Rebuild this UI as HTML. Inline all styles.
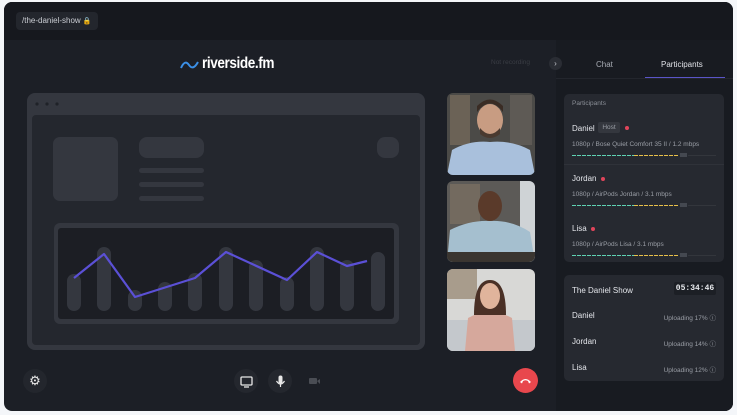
<!DOCTYPE html>
<html><head><meta charset="utf-8"><style>
*{margin:0;padding:0;box-sizing:border-box}
body{width:737px;height:415px;background:#f4f6f9;position:relative;overflow:hidden;font-family:"Liberation Sans",sans-serif}
.frame{position:absolute;left:4px;top:2px;width:729px;height:409px;background:#1c1f26;border-radius:8px;overflow:hidden}
.top{position:absolute;left:0;top:0;width:729px;height:38px;background:#16181e}
.pill{position:absolute;left:12px;top:10px;width:82px;height:18px;background:#23262d;border-radius:4px;color:#c9ccd2;font-size:8px;line-height:18px;padding-left:6px}
.side{position:absolute;left:552px;top:38px;width:177px;height:371px;background:#181b21}
.a{position:absolute}
.card{position:absolute;background:#262930;border-radius:5px}
.t{position:absolute;font-size:8px;color:#e3e5ea}
.s{position:absolute;font-size:6.5px;color:#9a9ea6}
.r{position:absolute;right:8px;font-size:6.5px;color:#9a9ea6}
.g{position:absolute;height:1px;background:repeating-linear-gradient(90deg,#5fd3b4 0 4px,transparent 4px 5px)}
.y{position:absolute;height:1px;background:repeating-linear-gradient(90deg,#e8c04a 0 4px,transparent 4px 5px)}
.ib{position:absolute;width:24px;height:24px;border-radius:12px;background:#24272e}
</style></head><body>
<div class="frame">
<div class="top"><div class="pill">/the-daniel-show <span style="font-size:7px">🔒</span></div></div>
<div class="side">
 <div class="a" style="left:40px;top:20px;font-size:8px;color:#a8acb4">Chat</div>
 <div class="a" style="left:105px;top:20px;font-size:8px;color:#e0e2e7">Participants</div>
 <div class="a" style="left:0;top:38px;width:177px;height:1px;background:#23262d"></div>
 <div class="a" style="left:89px;top:37px;width:80px;height:1px;background:#5a55c8"></div>
 <div class="card" style="left:8px;top:54px;width:160px;height:168px">
  <div class="s" style="left:8px;top:6px;color:#8a8e96">Participants</div>
  <div class="t" style="left:8px;top:30px">Daniel</div>
  <div class="a" style="left:34px;top:28px;width:22px;height:11px;background:#34373e;border-radius:2px;font-size:6.5px;color:#9a9ea6;line-height:11px;text-align:center">Host</div>
  <div class="a" style="left:61px;top:32px;width:4px;height:4px;border-radius:2px;background:#e0455a"></div>
  <div class="s" style="left:8px;top:47px">1080p / Bose Quiet Comfort 35 II / 1.2 mbps</div>
  <div class="g" style="left:8px;top:61px;width:62px"></div><div class="y" style="left:70px;top:61px;width:44px"></div>
  <div class="a" style="left:116px;top:59px;width:7px;height:4px;background:#444850"></div>
  <div class="a" style="left:124px;top:61px;width:28px;height:1px;background:#33363c"></div>
  <div class="a" style="left:0;top:70px;width:160px;height:1px;background:#2f3239"></div>
  <div class="t" style="left:8px;top:80px">Jordan</div>
  <div class="a" style="left:37px;top:83px;width:4px;height:4px;border-radius:2px;background:#e0455a"></div>
  <div class="s" style="left:8px;top:97px">1080p / AirPods Jordan / 3.1 mbps</div>
  <div class="g" style="left:8px;top:111px;width:62px"></div><div class="y" style="left:70px;top:111px;width:44px"></div>
  <div class="a" style="left:116px;top:109px;width:7px;height:4px;background:#444850"></div>
  <div class="a" style="left:124px;top:111px;width:28px;height:1px;background:#33363c"></div>
  <div class="t" style="left:8px;top:130px">Lisa</div>
  <div class="a" style="left:27px;top:133px;width:4px;height:4px;border-radius:2px;background:#e0455a"></div>
  <div class="s" style="left:8px;top:147px">1080p / AirPods Lisa / 3.1 mbps</div>
  <div class="g" style="left:8px;top:161px;width:62px"></div><div class="y" style="left:70px;top:161px;width:44px"></div>
  <div class="a" style="left:116px;top:159px;width:7px;height:4px;background:#444850"></div>
  <div class="a" style="left:124px;top:161px;width:28px;height:1px;background:#33363c"></div>
 </div>
 <div class="card" style="left:8px;top:235px;width:160px;height:106px">
  <div class="t" style="left:8px;top:11px">The Daniel Show</div>
  <div class="a" style="left:110px;top:7px;width:42px;height:13px;background:#1c1f25;border-radius:2px;font-family:'Liberation Mono',monospace;font-size:8px;font-weight:bold;color:#e8eaee;line-height:13px;text-align:center">05:34:46</div>
  <div class="t" style="left:8px;top:36px">Daniel</div><div class="r" style="top:37px">Uploading 17% ⓘ</div>
  <div class="t" style="left:8px;top:62px">Jordan</div><div class="r" style="top:63px">Uploading 14% ⓘ</div>
  <div class="t" style="left:8px;top:88px">Lisa</div><div class="r" style="top:89px">Uploading 12% ⓘ</div>
 </div>
</div>
<div class="a" style="left:545px;top:55px;width:13px;height:13px;border-radius:7px;background:#2a2d34;color:#c0c3c9;font-size:8px;text-align:center;line-height:13px">›</div>
<div class="a" style="left:487px;top:57px;font-size:6.5px;color:#3a3d44">Not recording</div>
<svg class="a" style="left:176px;top:56px" width="20" height="14"><path d="M1 10 Q5 1 9 7 Q13 13 18 4" stroke="#3b8fe6" stroke-width="2" fill="none"/></svg>
<div class="a" style="left:198px;top:53px;font-size:16px;font-weight:bold;color:#fff;letter-spacing:-0.5px;transform:scaleX(0.85);transform-origin:left">riverside.fm</div>
<svg class="a" style="left:0;top:0" width="552" height="409" viewBox="4 2 552 409">
 <rect x="27" y="93" width="398" height="257" rx="8" fill="#34373f"/>
 <circle cx="37" cy="104" r="1.6" fill="#1f2228"/><circle cx="47" cy="104" r="1.6" fill="#1f2228"/><circle cx="57" cy="104" r="1.6" fill="#1f2228"/>
 <rect x="32" y="115" width="388" height="230" rx="4" fill="#24272e"/>
 <rect x="53" y="137" width="65" height="64" rx="7" fill="#34373f"/>
 <rect x="139" y="137" width="65" height="21" rx="8" fill="#34373f"/>
 <rect x="139" y="168" width="65" height="5" rx="2.5" fill="#34373f"/>
 <rect x="139" y="182" width="65" height="5" rx="2.5" fill="#34373f"/>
 <rect x="139" y="196" width="65" height="5" rx="2.5" fill="#34373f"/>
 <rect x="377" y="137" width="22" height="21" rx="8" fill="#34373f"/>
 <rect x="54" y="223" width="345" height="101" rx="6" fill="#34373f"/>
 <rect x="58" y="228" width="336" height="91" rx="3" fill="#1c1e24"/>
 <g fill="#34373f">
 <rect x="67" y="274" width="14" height="37" rx="7"/><rect x="97" y="247" width="14" height="64" rx="7"/>
 <rect x="128" y="290" width="14" height="21" rx="7"/><rect x="158" y="282" width="14" height="29" rx="7"/>
 <rect x="188" y="273" width="14" height="38" rx="7"/><rect x="219" y="247" width="14" height="64" rx="7"/>
 <rect x="249" y="260" width="14" height="51" rx="7"/><rect x="280" y="277" width="14" height="34" rx="7"/>
 <rect x="310" y="247" width="14" height="64" rx="7"/><rect x="340" y="260" width="14" height="51" rx="7"/>
 <rect x="371" y="252" width="14" height="59" rx="7"/></g>
 <polyline points="74,278 104,254 135,297 195,278 226,252 287,280 317,252 347,266 367,261" fill="none" stroke="#5b50d6" stroke-width="2.2" stroke-linejoin="round"/>
 <defs><clipPath id="c1"><rect x="447" y="93" width="88" height="82" rx="6"/></clipPath><clipPath id="c2"><rect x="447" y="181" width="88" height="81" rx="6"/></clipPath><clipPath id="c3"><rect x="447" y="269" width="88" height="82" rx="6"/></clipPath></defs>
 <g clip-path="url(#c1)"><rect x="447" y="93" width="88" height="82" fill="#4b4a47"/>
  <rect x="450" y="95" width="20" height="50" fill="#6b6256"/><rect x="510" y="95" width="22" height="50" fill="#5e5a55"/>
  <path d="M447 175 L452 150 Q470 140 490 142 Q512 140 530 150 L535 175Z" fill="#a9c0dc"/>
  <ellipse cx="490" cy="120" rx="13" ry="16" fill="#c89c82"/><path d="M477 112 Q490 95 503 112 L503 106 Q490 93 477 106Z" fill="#3a2c24"/>
  <path d="M480 128 Q490 140 500 128 L500 134 Q490 142 480 134Z" fill="#4a3a30"/></g>
 <g clip-path="url(#c2)"><rect x="447" y="181" width="88" height="81" fill="#5c5a57"/>
  <rect x="520" y="181" width="15" height="81" fill="#cfd3d6"/><rect x="450" y="184" width="30" height="40" fill="#736a5f"/>
  <path d="M447 262 L450 230 Q470 220 490 221 Q512 220 530 232 L535 262Z" fill="#a5bfcf"/>
  <ellipse cx="490" cy="206" rx="12" ry="15" fill="#5a3a2a"/>
  <rect x="447" y="252" width="88" height="10" fill="#3a3530"/></g>
 <g clip-path="url(#c3)"><rect x="447" y="269" width="88" height="82" fill="#d8d8d6"/>
  <rect x="447" y="269" width="30" height="30" fill="#a89c8c"/><rect x="447" y="320" width="88" height="31" fill="#c4c8cc"/>
  <path d="M465 351 L468 318 Q490 306 512 318 L515 351Z" fill="#d6a89c"/>
  <path d="M474 315 Q474 280 490 280 Q506 280 506 315Z" fill="#4a3026"/>
  <ellipse cx="490" cy="296" rx="10" ry="13" fill="#e0b49c"/></g>
</svg>
<div class="ib" style="left:19px;top:367px;background:#23262d;color:#e8e8e8;font-size:13px;text-align:center;line-height:24px">⚙</div>
<div class="ib" style="left:230px;top:367px"><svg width="24" height="24"><rect x="7" y="8" width="11" height="8" rx="1" fill="none" stroke="#e8e8e8" stroke-width="1.3"/><path d="M10 18h5" stroke="#e8e8e8" stroke-width="1.3"/></svg></div>
<div class="ib" style="left:264px;top:367px"><svg width="24" height="24"><rect x="10.5" y="6.5" width="4" height="8" rx="2" fill="#e8e8e8"/><path d="M8.5 12q4 6 8 0M12.5 15v3" stroke="#e8e8e8" stroke-width="1.2" fill="none"/></svg></div>
<svg class="a" style="left:305px;top:375px" width="12" height="8"><rect x="0" y="1" width="8" height="6" rx="1" fill="#4a4d54"/><path d="M8 4l3-2v5z" fill="#4a4d54"/></svg>
<div class="a" style="left:509px;top:366px;width:25px;height:25px;border-radius:13px;background:#e8474d"><svg width="25" height="25"><path d="M7 14 Q12.5 8 18 14 L16 15.5 L15 13 Q12.5 11.5 10 13 L9 15.5Z" fill="#fff"/></svg></div>
</div>
</body></html>
